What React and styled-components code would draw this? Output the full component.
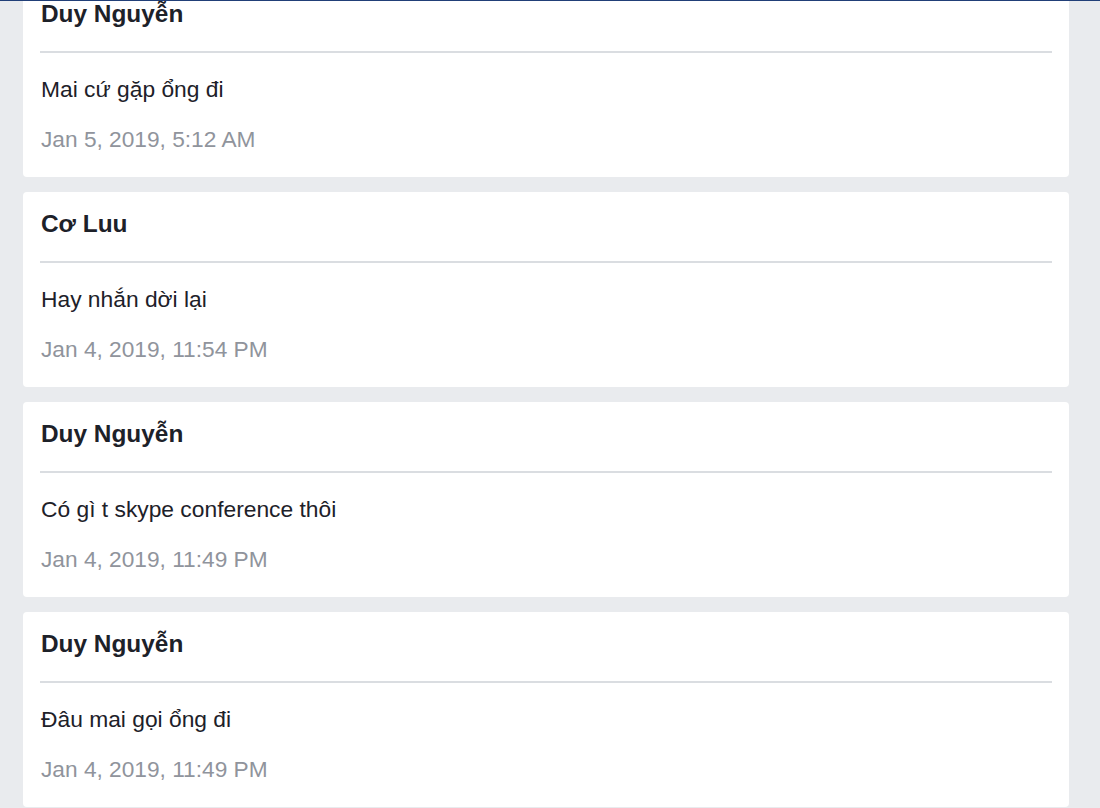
import React from 'react';
import styled, { createGlobalStyle } from 'styled-components';

const GlobalStyle = createGlobalStyle`
  html, body {
    margin: 0;
    padding: 0;
    background-color: #e9ebee;
    font-family: 'Liberation Sans', Arial, sans-serif;
    overflow: hidden;
  }
`;

// the bottom edge of the fixed header, page is scrolled under it
const HeaderEdge = styled.div`
  position: fixed;
  top: 0;
  left: 0;
  right: 0;
  height: 1px;
  background-color: #213f78;
  z-index: 10;
`;

const Feed = styled.div`
  display: flex;
  flex-direction: column;
  gap: 15px;
  padding: 0 31px 0 23px;
  margin-top: -18px;
`;

const Card = styled.div`
  background-color: #ffffff;
  border-radius: 4px;
  padding: 0 17px 22px;
`;

const Author = styled.div`
  font-size: 24.4px;
  font-weight: bold;
  line-height: 32px;
  color: #1d2129;
  padding: 16px 0 21px 1px;
  border-bottom: 2px solid #dadde1;
`;

const Message = styled.div`
  font-size: 22.8px;
  line-height: 32px;
  color: #1d2129;
  margin-top: 20px;
  padding-left: 1px;
`;

const Time = styled.div`
  font-size: 22.7px;
  line-height: 32px;
  color: #90949c;
  margin-top: 18px;
  padding-left: 1px;
`;

const messages = [
  { author: 'Duy Nguyễn', text: 'Mai cứ gặp ổng đi', time: 'Jan 5, 2019, 5:12 AM' },
  { author: 'Cơ Luu', text: 'Hay nhắn dời lại', time: 'Jan 4, 2019, 11:54 PM' },
  { author: 'Duy Nguyễn', text: 'Có gì t skype conference thôi', time: 'Jan 4, 2019, 11:49 PM' },
  { author: 'Duy Nguyễn', text: 'Đâu mai gọi ổng đi', time: 'Jan 4, 2019, 11:49 PM' },
];

const App = () => (
  <>
    <GlobalStyle />
    <HeaderEdge />
    <Feed>
      {messages.map((m, i) => (
        <Card key={i}>
          <Author>{m.author}</Author>
          <Message>{m.text}</Message>
          <Time>{m.time}</Time>
        </Card>
      ))}
    </Feed>
  </>
);

export default App;
